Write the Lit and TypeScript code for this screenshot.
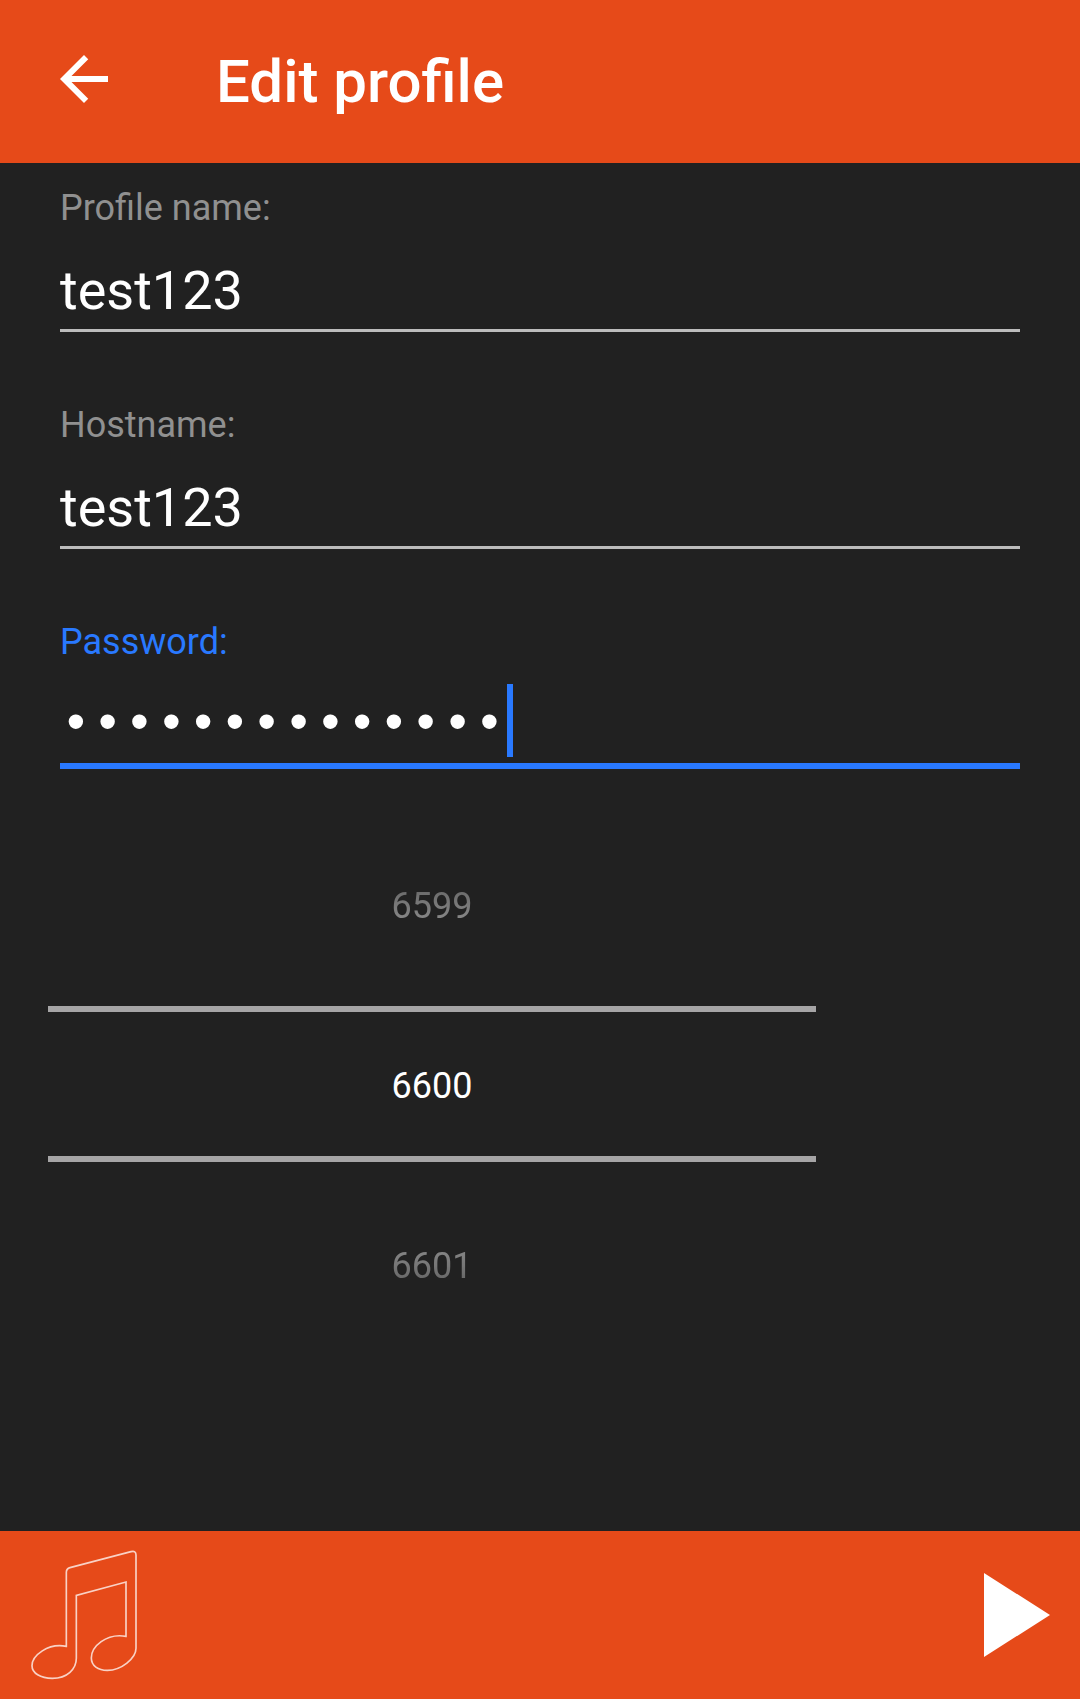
import { LitElement, html, css } from "lit";
import { customElement, property, state } from "lit/decorators.js";
import { classMap } from "lit/directives/class-map.js";

const BULLET_ADVANCE = 32;

@customElement("profile-field")
class ProfileField extends LitElement {
  @property() label = "";
  @property() value = "";
  @property() type = "text";
  @property({ type: Boolean }) active = false;

  static styles = css`
    :host {
      display: block;
    }
    .label {
      display: block;
      font-size: 36px;
      line-height: 42px;
      color: #909090;
    }
    .box {
      position: relative;
      border-bottom: 3px solid #bcbcbc;
      padding: 29px 0 7px;
    }
    .input {
      display: block;
      box-sizing: border-box;
      width: 100%;
      height: 64px;
      margin: 0;
      padding: 0;
      border: 0;
      outline: 0;
      background: none;
      color: #fff;
      font-family: Roboto, sans-serif;
      font-size: 54px;
      line-height: 60px;
    }
    .secret {
      padding-top: 4px;
      font-family: "Liberation Mono", monospace;
      font-size: 53px;
    }
    .active .label {
      color: #2979ff;
    }
    .active .box {
      border-bottom: 6px solid #2979ff;
    }
    .caret {
      position: absolute;
      top: 21px;
      width: 6px;
      height: 73px;
      background: #2979ff;
    }
  `;

  private onInput(e: Event) {
    this.value = (e.target as HTMLInputElement).value;
  }

  render() {
    const secret = this.type === "password";
    return html`
      <div class=${classMap({ field: true, active: this.active })}>
        <label class="label" for="control">${this.label}</label>
        <div class="box">
          <input
            id="control"
            class=${classMap({ input: true, secret })}
            type=${this.type}
            .value=${this.value}
            @input=${this.onInput}
          />
          ${this.active
            ? html`<span class="caret" style="left:${this.value.length * BULLET_ADVANCE - 1}px"></span>`
            : ""}
        </div>
      </div>
    `;
  }
}

@customElement("port-picker")
class PortPicker extends LitElement {
  @state() private port = 6600;

  static styles = css`
    :host {
      display: flex;
      flex-direction: column;
    }
    .step,
    .current {
      display: block;
      box-sizing: border-box;
      width: 100%;
      margin: 0;
      padding: 0;
      border: 0;
      outline: 0;
      border-radius: 0;
      background: none;
      color: #fff;
      font-family: Roboto, sans-serif;
      font-size: 36px;
      line-height: 42px;
      text-align: center;
    }
    .step {
      height: 192px;
    }
    .previous {
      padding-bottom: 8px;
      mask-image: linear-gradient(to bottom, transparent, rgba(0, 0, 0, 0.84));
    }
    .next {
      padding-top: 16px;
      mask-image: linear-gradient(to top, transparent, rgba(0, 0, 0, 0.84));
    }
    .current {
      height: 156px;
      padding-top: 4px;
      border-top: 6px solid #a6a5a6;
      border-bottom: 6px solid #a6a5a6;
    }
  `;

  render() {
    return html`
      <button class="step previous" @click=${() => (this.port -= 1)}>${this.port - 1}</button>
      <input
        class="current"
        aria-label="Port"
        inputmode="numeric"
        .value=${String(this.port)}
        @change=${(e: Event) => (this.port = Number((e.target as HTMLInputElement).value) || this.port)}
      />
      <button class="step next" @click=${() => (this.port += 1)}>${this.port + 1}</button>
    `;
  }
}

@customElement("app-root")
class AppRoot extends LitElement {
  static styles = css`
    :host {
      display: flex;
      flex-direction: column;
      min-height: 100vh;
      background: #212121;
      color: #fff;
      font-family: Roboto, sans-serif;
    }
    .bar {
      display: flex;
      align-items: center;
      background: #e64a19;
    }
    .header {
      height: 163px;
      padding: 0 48px;
      gap: 96px;
    }
    .footer {
      height: 168px;
      justify-content: space-between;
    }
    .icon-button {
      display: block;
      padding: 0;
      border: 0;
      background: none;
      color: #fff;
    }
    .back {
      padding-bottom: 5px;
    }
    .icon {
      display: block;
    }
    .title {
      margin: 0;
      font-size: 60px;
      font-weight: 500;
      line-height: 70px;
    }
    .form {
      flex: 1;
      display: flex;
      flex-direction: column;
      gap: 72px;
      padding: 24px 60px;
    }
    .group {
      display: flex;
      flex-direction: column;
      gap: 45px;
    }
    .picker {
      width: 80%;
      margin-left: -12px;
    }
  `;

  render() {
    return html`
      <header class="bar header">
        <button class="icon-button back" aria-label="Back">
          <svg class="icon" width="72" height="72" viewBox="0 0 24 24" fill="currentColor">
            <path d="M20 11H7.83l5.59-5.59L12 4l-8 8 8 8 1.410-1.410L7.83 13H20v-2z" />
          </svg>
        </button>
        <h1 class="title">Edit profile</h1>
      </header>
      <main class="form">
        <profile-field label="Profile name:" value="test123"></profile-field>
        <profile-field label="Hostname:" value="test123"></profile-field>
        <div class="group">
          <profile-field label="Password:" type="password" value="secretpassword" active></profile-field>
          <port-picker class="picker"></port-picker>
        </div>
      </main>
      <footer class="bar footer">
        <svg class="icon" width="180" height="168" viewBox="0 0 540 504" fill="none"
          stroke="#fff" stroke-opacity="0.75" stroke-width="5">
          <path d="M199 346V124Q199 113 210 110L393 62Q408 58 408 72V352C408 382 364 418 322 418C294 418 274 404 274 381C274 347 318 306 378 316V153L229 193V382C229 414 202 442 157 442C121 442 96 426 96 404C96 374 144 335 199 346Z" />
        </svg>
        <button class="icon-button" aria-label="Play">
          <svg class="icon" width="120" height="168" viewBox="0 0 120 168" fill="currentColor">
            <path d="M24 42L90 84L24 126Z" />
          </svg>
        </button>
      </footer>
    `;
  }
}
